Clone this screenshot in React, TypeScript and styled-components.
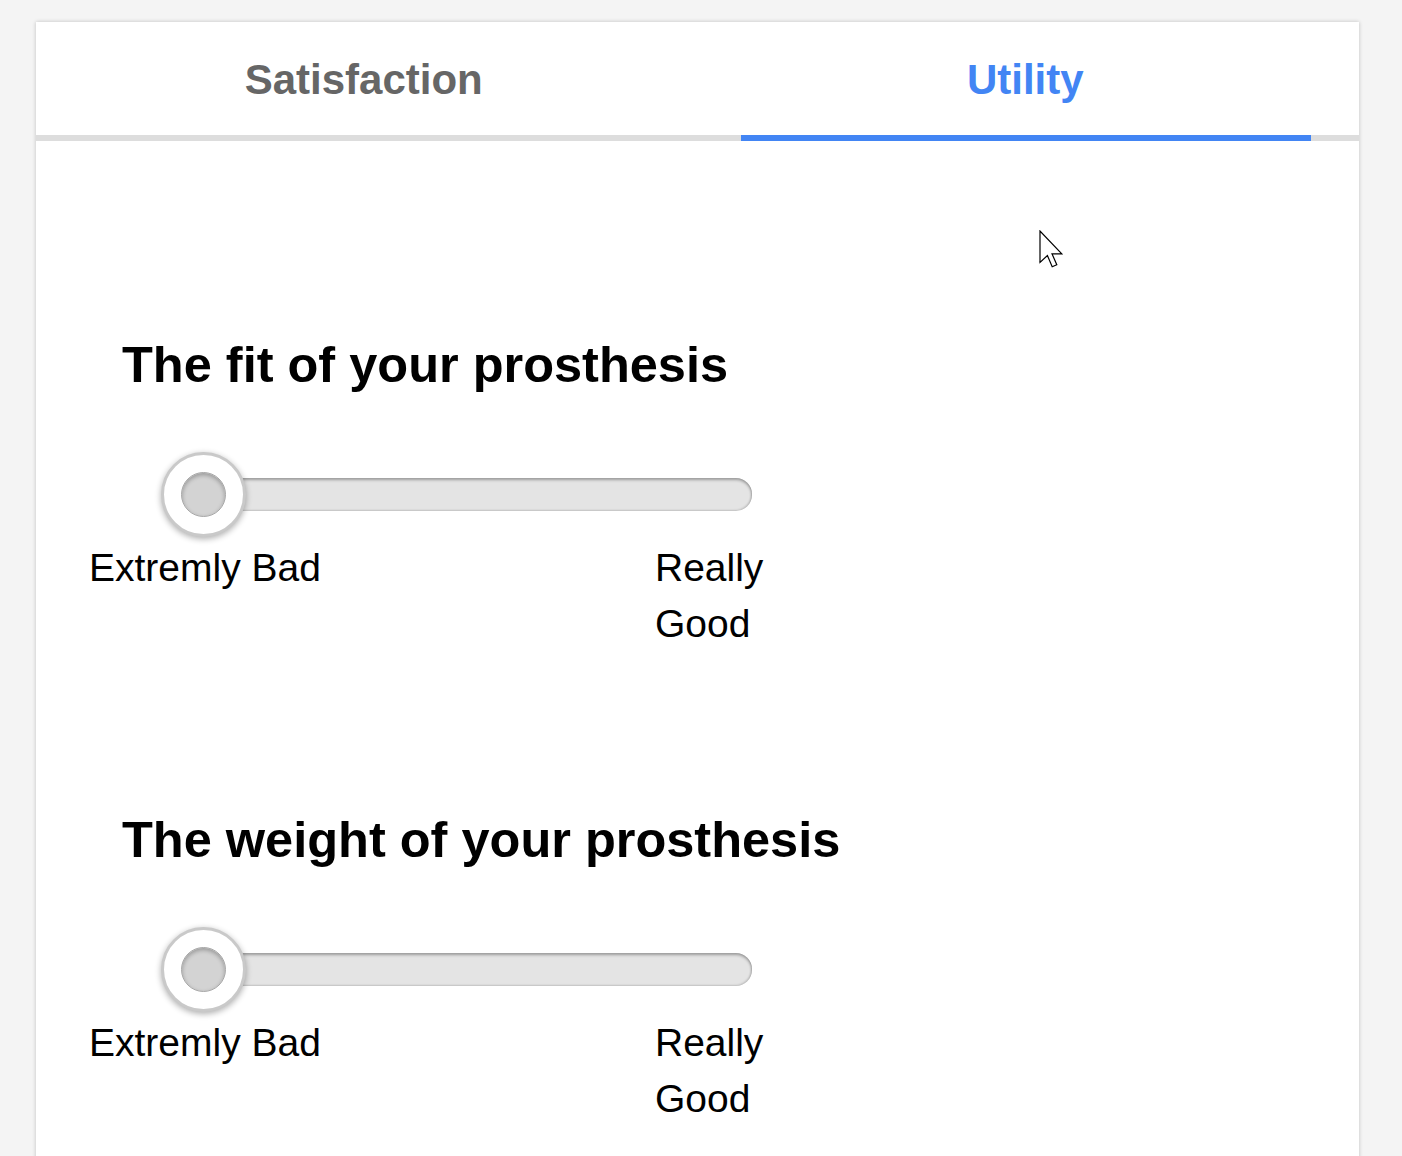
import React from 'react'
import styled, { createGlobalStyle } from 'styled-components'

interface Question {
    id: string,
    title: string,
    low: string,
    high: string,
}

const questions: Question[] = [
    { id: 'fit', title: 'The fit of your prosthesis', low: 'Extremly Bad', high: 'Really Good' },
    { id: 'weight', title: 'The weight of your prosthesis', low: 'Extremly Bad', high: 'Really Good' },
]

function App() {
    const [tab, setTab] = React.useState('utility')

    return (
        <>
            <GlobalStyle />
            <Page>
                <Card>
                    <TabBar>
                        <Tab active={tab === 'satisfaction'} onClick={() => setTab('satisfaction')}>
                            Satisfaction
                        </Tab>
                        <Tab active={tab === 'utility'} onClick={() => setTab('utility')}>
                            Utility
                        </Tab>
                    </TabBar>
                    <Content>
                        {questions.map((q) => (
                            <Section key={q.id}>
                                <Heading>{q.title}</Heading>
                                <SliderRow role='slider' aria-valuemin={0} aria-valuemax={100} aria-valuenow={0}>
                                    <Thumb>
                                        <ThumbDot />
                                    </Thumb>
                                    <Track />
                                </SliderRow>
                                <Labels>
                                    <LowLabel>{q.low}</LowLabel>
                                    <HighLabel>{q.high}</HighLabel>
                                </Labels>
                            </Section>
                        ))}
                    </Content>
                    <Pointer width='26' height='39' viewBox='0 0 13 19.5'>
                        <path
                            d='M0.5 0.5 L0.5 16.2 L4.2 12.8 L6.6 18.4 L8.9 17.4 L6.5 11.9 L11.4 11.9 Z'
                            fill='#fff'
                            stroke='#000'
                            strokeWidth='0.6'
                            strokeLinejoin='miter'
                        />
                    </Pointer>
                </Card>
            </Page>
        </>
    )
}

const GlobalStyle = createGlobalStyle`
    html, body {
        margin: 0;
        padding: 0;
        background: #f4f4f4;
        font-family: "Liberation Sans", Arial, sans-serif;
    }
`

const Page = styled.div`
    padding: 22px 43px 0 36px;
    height: 1156px;
    box-sizing: border-box;
    overflow: hidden;
`

const Card = styled.div`
    position: relative;
    background: #fff;
    min-height: 1200px;
    box-shadow: 0 0 4px rgba(0, 0, 0, 0.22);
`

const TabBar = styled.div`
    display: grid;
    grid-template-columns: 1fr 1fr;
    border-bottom: 6px solid #dddddd;
`

const Tab = styled.div<{ active: boolean }>`
    position: relative;
    height: 113px;
    padding: 2px 6px 0 0;
    box-sizing: border-box;
    display: flex;
    align-items: center;
    justify-content: center;
    font-size: 42px;
    font-weight: bold;
    color: ${(p) => (p.active ? '#4285f4' : '#666666')};
    cursor: pointer;

    &::after {
        content: '';
        display: ${(p) => (p.active ? 'block' : 'none')};
        position: absolute;
        left: 43px;
        right: 48px;
        bottom: -6px;
        height: 6px;
        background: #4285f4;
    }
`

const Content = styled.div`
    padding: 195px 0 0 53px;
    display: flex;
    flex-direction: column;
    gap: 159px;
`

const Section = styled.div`
    display: flex;
    flex-direction: column;
`

const Heading = styled.h2`
    margin: 0 0 0 33px;
    font-size: 50.5px;
    line-height: 58px;
    font-weight: bold;
    color: #000;
`

const SliderRow = styled.div`
    margin: 58px 0 0 72px;
    width: 591px;
    height: 85px;
    display: flex;
    align-items: center;
`

const Thumb = styled.div`
    position: relative;
    z-index: 1;
    flex: none;
    width: 85px;
    height: 85px;
    box-sizing: border-box;
    border-radius: 50%;
    background: #fff;
    border: 3px solid #c9c9c9;
    box-shadow: 0 2px 6px rgba(0, 0, 0, 0.32);
    display: flex;
    align-items: center;
    justify-content: center;
`

const ThumbDot = styled.div`
    width: 45px;
    height: 45px;
    box-sizing: border-box;
    border-radius: 50%;
    background: #d3d3d3;
    border: 1px solid #a8a8a8;
    box-shadow: inset 0 2px 4px rgba(0, 0, 0, 0.28);
`

const Track = styled.div`
    flex: 1;
    height: 33px;
    margin-left: -42px;
    background: #e4e4e4;
    border-radius: 0 16px 16px 0;
    box-shadow: inset 0 2px 3px rgba(0, 0, 0, 0.32), inset -1px -1px 2px rgba(0, 0, 0, 0.14);
`

const Labels = styled.div`
    margin-top: 3px;
    display: flex;
    justify-content: space-between;
    width: 690px;
    font-size: 39px;
    line-height: 56px;
    color: #000;
`

const LowLabel = styled.div``

const HighLabel = styled.div`
    width: 124px;
`

const Pointer = styled.svg`
    position: absolute;
    left: 1003px;
    top: 208px;
`

export default App
